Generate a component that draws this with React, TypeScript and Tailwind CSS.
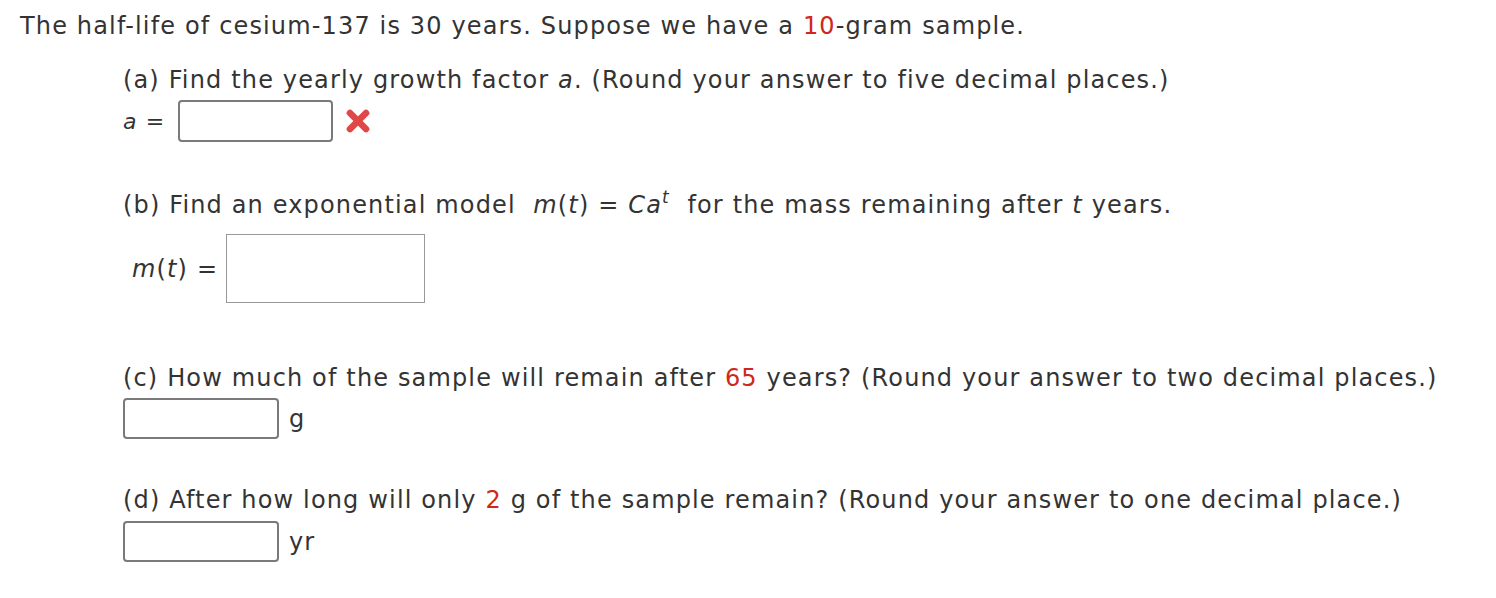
import { X } from 'lucide-react';

const Red = ({ children }: { children: React.ReactNode }) => <span className="text-[#d0271d]">{children}</span>;

function Box({ className = '' }: { className?: string }) {
  return <div className={`bg-white border-2 border-[#7a7a7a] ${className}`} />;
}

export default function App() {
  return (
    <div className="bg-white min-h-[598px] pl-[20px] pt-[10px] text-[24px] tracking-[1.15px] text-[#333] [font-family:'DejaVu_Sans',Verdana,sans-serif]">
      <div className="h-[32px] leading-[32px]">
        The half-life of cesium-137 is 30 years. Suppose we have a <Red>10</Red>-gram sample.
      </div>

      <div className="pl-[103px]">
        {/* (a) */}
        <div className="mt-[22px] h-[32px] leading-[32px]">
          (a) Find the yearly growth factor <i>a</i>. (Round your answer to five decimal places.)
        </div>
        <div className="mt-[4px] flex items-center h-[42px]">
          <span className="text-[22px]"><i>a</i> =</span>
          <Box className="ml-[13px] w-[155px] h-[42px] rounded-[4px]" />
          <X className="ml-[9px] w-[32px] h-[32px] text-[#e04848]" strokeWidth={5} />
        </div>

        {/* (b) */}
        <div className="mt-[47px] h-[32px] leading-[32px]">
          (b) Find an exponential model&nbsp; <i>m</i>(<i>t</i>) = <i>Ca<sup className="text-[17px] relative -top-[10px]">t</sup></i>&nbsp; for the mass remaining after <i>t</i> years.
        </div>
        <div className="mt-[13px] flex items-center pl-[9px]">
          <span><i>m</i>(<i>t</i>) =</span>
          <div className="ml-[8px] w-[199px] h-[69px] bg-white border border-[#999]" />
        </div>

        {/* (c) */}
        <div className="mt-[59px] h-[32px] leading-[32px]">
          (c) How much of the sample will remain after <Red>65</Red> years? (Round your answer to two decimal places.)
        </div>
        <div className="mt-[4px] flex items-center h-[41px]">
          <Box className="w-[156px] h-[41px] rounded-[4px]" />
          <span className="ml-[10px]">g</span>
        </div>

        {/* (d) */}
        <div className="mt-[45px] h-[32px] leading-[32px]">
          (d) After how long will only <Red>2</Red> g of the sample remain? (Round your answer to one decimal place.)
        </div>
        <div className="mt-[5px] flex items-center h-[41px]">
          <Box className="w-[156px] h-[41px] rounded-[4px]" />
          <span className="ml-[10px]">yr</span>
        </div>
      </div>
    </div>
  );
}
